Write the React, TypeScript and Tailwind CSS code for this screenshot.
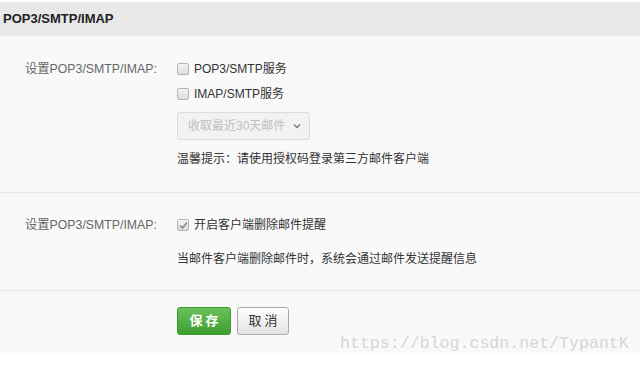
import React from "react";

const font = { fontFamily: '"Liberation Sans", "Noto Sans CJK SC", sans-serif' };

function Box({ checked = false }: { checked?: boolean }) {
  return (
    <span className="relative inline-block w-[12px] h-[12px] rounded-[2px] border border-[#b5b5b5] bg-gradient-to-b from-[#f4f4f4] to-[#dcdcdc] shrink-0">
      {checked && (
        <svg className="absolute left-[1px] top-[1px]" width="9" height="9" viewBox="0 0 9 9">
          <path d="M1.2 4.6 L3.5 7 L7.8 1.8" fill="none" stroke="#8f8f8f" strokeWidth="1.8" />
        </svg>
      )}
    </span>
  );
}

export default function App() {
  return (
    <div className="relative w-[640px] h-[365px] bg-white overflow-hidden" style={font}>
      <div className="pt-[2px]">
        <div className="h-[34px] bg-[#e8e8e8] flex items-center pl-[3px] text-[13px] font-bold text-[#222]">
          POP3/SMTP/IMAP
        </div>
        <div className="bg-[#f9f9f9] h-[317px]">
          <div className="flex pl-[25px] pt-[23px] pb-[22px] border-b border-[#e6e6e6] h-[157px]">
            <div className="w-[152px] text-[12.3px] text-[#666] leading-[20px]">设置POP3/SMTP/IMAP:</div>
            <div className="flex flex-col text-[12px] text-[#333]">
              <div className="flex items-center gap-[5px] h-[20px] leading-[20px]">
                <Box />
                <span>POP3/SMTP服务</span>
              </div>
              <div className="flex items-center gap-[5px] h-[20px] mt-[5px] leading-[20px]">
                <Box />
                <span>IMAP/SMTP服务</span>
              </div>
              <div className="mt-[8px] w-[133px] h-[28px] rounded-[3px] border border-[#dcdcdc] bg-[#f2f2f2] flex items-center pl-[10px] text-[#c0c0c0]">
                <span>收取最近30天邮件</span>
                <svg className="ml-[8px]" width="8" height="6" viewBox="0 0 8 6">
                  <path d="M1 1.5 L4 4.5 L7 1.5" fill="none" stroke="#777" strokeWidth="1.3" />
                </svg>
              </div>
              <div className="mt-[9px] leading-[20px] text-[#333]">温馨提示：请使用授权码登录第三方邮件客户端</div>
            </div>
          </div>
          <div className="flex pl-[25px] pt-[22px] border-b border-[#e6e6e6] h-[98px]">
            <div className="w-[152px] text-[12.3px] text-[#666] leading-[20px]">设置POP3/SMTP/IMAP:</div>
            <div className="flex flex-col text-[12px] text-[#333]">
              <div className="flex items-center gap-[5px] h-[20px] leading-[20px]">
                <Box checked />
                <span>开启客户端删除邮件提醒</span>
              </div>
              <div className="mt-[14px] leading-[20px]">当邮件客户端删除邮件时，系统会通过邮件发送提醒信息</div>
            </div>
          </div>
          <div className="flex pl-[177px] pt-[16px] gap-[6px]">
            <button className="w-[54px] h-[28px] rounded-[3px] border border-[#3f9a2c] bg-gradient-to-b from-[#69c25a] to-[#3e9e2e] text-white text-[13px] font-bold tracking-[3px] pl-[3px]">
              保存
            </button>
            <button className="w-[52px] h-[28px] rounded-[3px] border border-[#a9a9a9] bg-gradient-to-b from-[#ffffff] to-[#e2e2e2] text-[#333] text-[13px] tracking-[3px] pl-[3px]">
              取消
            </button>
          </div>
        </div>
      </div>
      <div
        className="absolute left-[340px] top-[334px] text-[16.6px] leading-[20px] text-[#d6d6d6] whitespace-nowrap"
        style={{ fontFamily: '"Liberation Mono", monospace' }}
      >
        https://blog.csdn.net/TypantK
      </div>
    </div>
  );
}
